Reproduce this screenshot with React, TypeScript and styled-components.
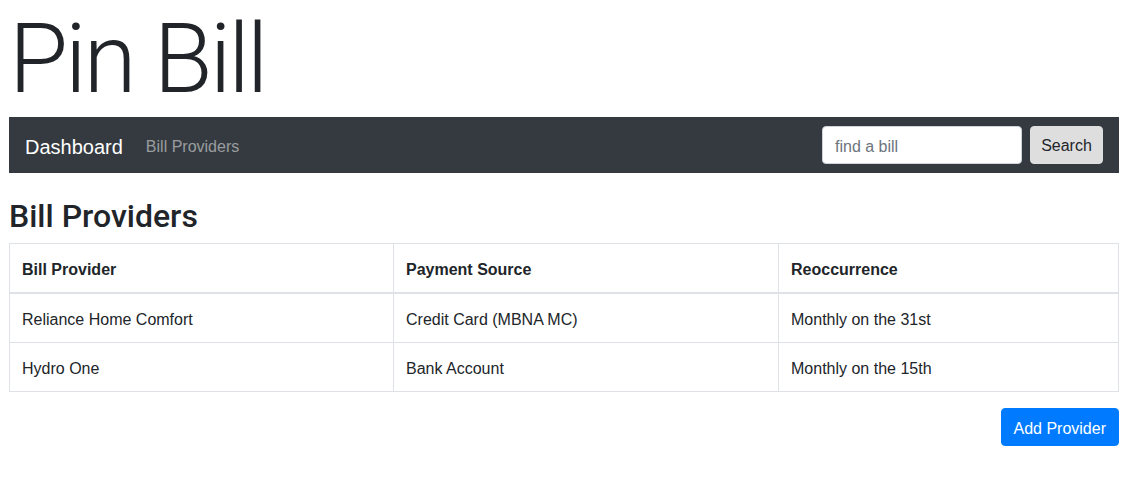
import styled, { createGlobalStyle } from "styled-components";

const GlobalStyle = createGlobalStyle`
  * { box-sizing: border-box; }
  body {
    margin: 0;
    background: #fff;
    color: #212529;
    font-family: "Liberation Sans", Arial, sans-serif;
    font-size: 16px;
    line-height: 1.5;
  }
`;

const providers = [
  { name: "Reliance Home Comfort", source: "Credit Card (MBNA MC)", when: "Monthly on the 31st" },
  { name: "Hydro One", source: "Bank Account", when: "Monthly on the 15th" },
];

const App = () => {
  return (
    <>
      <GlobalStyle />
      <Page>
        <Title>Pin Bill</Title>
        <Navbar>
          <NavLeft>
            <Brand>Dashboard</Brand>
            <NavLink>Bill Providers</NavLink>
          </NavLeft>
          <SearchForm onSubmit={(e) => e.preventDefault()}>
            <SearchInput placeholder="find a bill" />
            <SearchButton type="submit">Search</SearchButton>
          </SearchForm>
        </Navbar>
        <Heading>Bill Providers</Heading>
        <Table>
          <colgroup>
            <col style={{ width: 384 }} />
            <col style={{ width: 385 }} />
            <col />
          </colgroup>
          <thead>
            <tr>
              <Th>Bill Provider</Th>
              <Th>Payment Source</Th>
              <Th>Reoccurrence</Th>
            </tr>
          </thead>
          <tbody>
            {providers.map((p) => (
              <tr key={p.name}>
                <Td>{p.name}</Td>
                <Td>{p.source}</Td>
                <Td>{p.when}</Td>
              </tr>
            ))}
          </tbody>
        </Table>
        <Actions>
          <PrimaryButton>Add Provider</PrimaryButton>
        </Actions>
      </Page>
    </>
  );
};

export default App;

const Page = styled.div`
  width: 1110px;
  margin-left: 9px;
`;

const Title = styled.h1`
  margin: 0;
  padding: 3px 0 2px;
  font-size: 96px;
  font-weight: 300;
  line-height: 112px;
  letter-spacing: -3px;
  font-family: Roboto, "Liberation Sans", sans-serif;
  color: #212529;
`;

const Navbar = styled.nav`
  display: flex;
  align-items: center;
  justify-content: space-between;
  height: 56px;
  padding: 0 16px;
  background: #343a40;
`;

const NavLeft = styled.div`
  display: flex;
  align-items: center;
  padding-top: 3px;
`;

const Brand = styled.a`
  font-size: 20px;
  color: #fff;
  margin-right: 23px;
`;

const NavLink = styled.a`
  font-size: 16px;
  color: rgba(255, 255, 255, 0.5);
`;

const SearchForm = styled.form`
  display: flex;
  align-items: center;
  gap: 8px;
`;

const SearchInput = styled.input`
  width: 200px;
  height: 38px;
  padding: 8px 12px 4px;
  font: inherit;
  font-size: 16px;
  color: #495057;
  background: #fff;
  border: 1px solid #ced4da;
  border-radius: 4px;
  &::placeholder { color: #6c757d; }
`;

const SearchButton = styled.button`
  width: 73px;
  height: 38px;
  padding: 2px 0 0;
  font: inherit;
  font-size: 16px;
  color: #212529;
  background: #dedede;
  border: 1px solid #dedede;
  border-radius: 4px;
`;

const Heading = styled.h2`
  margin: 24px 0 8px;
  font-family: Roboto, "Liberation Sans", sans-serif;
  font-size: 32px;
  font-weight: 500;
  line-height: 1.2;
  color: #212529;
`;

const Table = styled.table`
  width: 100%;
  border-collapse: collapse;
  margin-bottom: 16px;
  table-layout: fixed;
`;

const Th = styled.th`
  padding: 14px 12px 10px;
  text-align: left;
  font-weight: 700;
  border: 1px solid #dee2e6;
  border-bottom-width: 2px;
`;

const Td = styled.td`
  padding: 14px 12px 10px;
  border: 1px solid #dee2e6;
`;

const Actions = styled.div`
  display: flex;
  justify-content: flex-end;
`;

const PrimaryButton = styled.button`
  height: 38px;
  padding: 8px 12px 4px;
  font: inherit;
  font-size: 16px;
  color: #fff;
  background: #007bff;
  border: 1px solid #007bff;
  border-radius: 4px;
`;
